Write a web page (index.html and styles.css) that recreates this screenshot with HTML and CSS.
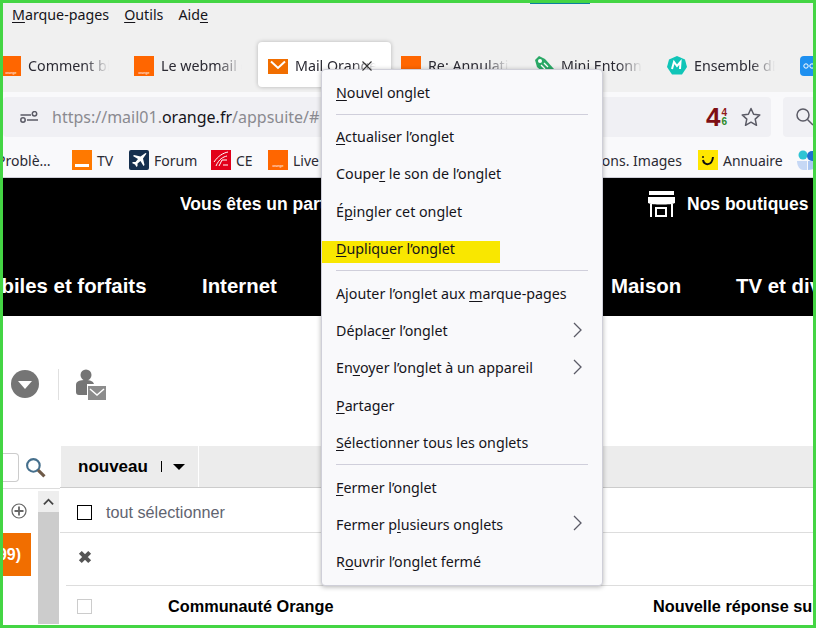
FILE: index.html
```html
<!DOCTYPE html>
<html lang="fr">
<head>
<meta charset="utf-8">
<title>Mail Orange</title>
<link rel="stylesheet" href="styles.css">
</head>
<body>
<div class="window">
  <div class="sync-line"></div>
  <div class="menubar">
    <span><u>M</u>arque-pages</span>
    <span><u>O</u>utils</span>
    <span>Aid<u>e</u></span>
  </div>

  <div class="tabs">
    <div class="tab first">
      <svg class="fav" viewBox="0 0 20 20"><rect width="20" height="20" fill="#ff6600"/><text x="10" y="18" class="tiny">orange</text></svg>
      <span class="tab-title">Comment bloquer</span>
    </div>
    <div class="tab second">
      <svg class="fav" viewBox="0 0 20 20"><rect width="20" height="20" fill="#ff6600"/><text x="10" y="18" class="tiny">orange</text></svg>
      <span class="tab-title">Le webmail d'Orange</span>
    </div>
    <div class="tab active">
      <svg class="fav" viewBox="0 0 20 20"><rect width="20" height="15" y="3" fill="#f16e00"/><path d="M3 5.500 10 12 17 5.500" fill="none" stroke="#fff" stroke-width="2"/></svg>
      <span class="tab-title">Mail Orange</span>
      <svg class="close" viewBox="0 0 10 10"><path d="M0.500 0.500 9.500 9.500M9.500 0.500 0.500 9.500" stroke="#333" stroke-width="1.100"/></svg>
    </div>
    <div class="tab">
      <svg class="fav" viewBox="0 0 20 20"><rect width="20" height="20" fill="#ff6600"/></svg>
      <span class="tab-title">Re: Annulation</span>
    </div>
    <div class="tab">
      <svg class="fav" viewBox="0 0 20 20"><path d="M1 4 5 0 11 3 20 13 13 20 3 11Z" fill="#2aa866"/><circle cx="6" cy="5" r="2" fill="#fff"/><path d="M7 9 11 13M10 7 14 11" stroke="#fff" stroke-width="1.300"/></svg>
      <span class="tab-title">Mini Entonnoir</span>
    </div>
    <div class="tab">
      <svg class="fav" viewBox="0 0 20 20"><path d="M10 0 18 3.500 20 11 15 18.500 5 18.500 0 11 2 3.500Z" fill="#10c5b8"/><path d="M5 13 7 6 10 10 13.500 6 13 13" fill="none" stroke="#fff" stroke-width="2"/></svg>
      <span class="tab-title">Ensemble dEntonnoir</span>
    </div>
    <div class="tab">
      <svg class="fav" viewBox="0 0 20 20"><rect width="20" height="20" rx="4" fill="#1e90f0"/><circle cx="6" cy="10" r="2.200" fill="none" stroke="#fff"/><circle cx="12" cy="10" r="2.200" fill="none" stroke="#fff"/></svg>
    </div>
  </div>

  <div class="toolbar">
    <div class="urlbar">
      <svg class="tune" viewBox="0 0 18 12"><path d="M0.500 4H11" stroke="#5b5b66" stroke-width="1.500"/><circle cx="14.500" cy="2.800" r="2.200" fill="none" stroke="#5b5b66" stroke-width="1.500"/><circle cx="3" cy="9" r="2.200" fill="none" stroke="#5b5b66" stroke-width="1.500"/><path d="M7 9H18" stroke="#5b5b66" stroke-width="1.500"/></svg>
      <span class="url">https://mail01.<b>orange.fr</b>/appsuite/#</span>
      <span class="badge"><span class="big">4</span><span class="stack"><i class="red">4</i><i class="green">6</i></span></span>
      <svg class="star" viewBox="0 0 20 20"><path d="M10 1.500 12.600 7.200 18.800 7.900 14.200 12.100 15.500 18.300 10 15.200 4.500 18.300 5.800 12.100 1.200 7.900 7.400 7.200Z" fill="none" stroke="#5b5b66" stroke-width="1.500" stroke-linejoin="round"/></svg>
    </div>
    <div class="searchbar">
      <svg class="mag" viewBox="0 0 20 20"><circle cx="8" cy="8" r="6" fill="none" stroke="#5b5b66" stroke-width="1.500"/><path d="M12.500 12.500 18 18" stroke="#5b5b66" stroke-width="1.500"/></svg>
    </div>
  </div>

  <div class="bookmarks">
    <span class="bm-text clip">Problè…</span>
    <div class="bm bm-tv">
      <svg class="fav" viewBox="0 0 20 20"><rect width="20" height="20" fill="#ff7900"/><rect x="3" y="14" width="14" height="3" fill="#fff"/></svg>
      <span class="bm-text">TV</span>
    </div>
    <div class="bm bm-forum">
      <svg class="fav" viewBox="0 0 20 20"><rect width="20" height="20" rx="2" fill="#16304f"/><path d="M16.500 3 11.500 6.500 5 5 4 6 9 9 6.500 12 4 12 3 13 6 14.500 7.500 17 8.500 16 8.500 13.500 11.500 11 14.500 16 15.500 15 14 8.500 17.500 3.500Z" fill="#fff"/></svg>
      <span class="bm-text">Forum</span>
    </div>
    <div class="bm bm-ce">
      <svg class="fav" viewBox="0 0 20 20"><rect width="20" height="20" fill="#e2001a"/><path d="M3 12C7 6 12 3 17 2M5 16C8 9 12 7 16 6M8 16 11 10H16M12 15H17" fill="none" stroke="#fff" stroke-width="1"/></svg>
      <span class="bm-text">CE</span>
    </div>
    <div class="bm bm-live">
      <svg class="fav" viewBox="0 0 20 20"><rect width="20" height="20" fill="#ff6600"/><text x="10" y="17" class="tiny">orange</text></svg>
      <span class="bm-text">Live</span>
    </div>
    <span class="bm-text bm-cons">Cons. Images</span>
    <div class="bm bm-annu">
      <svg class="fav" viewBox="0 0 20 20"><rect width="20" height="20" fill="#ffe600"/><path d="M5 10C6 16 14 16 15 7" fill="none" stroke="#111" stroke-width="2"/><circle cx="5" cy="7" r="1" fill="#111"/></svg>
      <span class="bm-text">Annuaire</span>
    </div>
    <svg class="fav bm-last" viewBox="0 0 20 20"><circle cx="6" cy="5" r="4.500" fill="#2ec4d4"/><circle cx="15" cy="6" r="5" fill="#1e6fd0"/><path d="M0 11H10V20H6C3 20 0 16 0 11Z" fill="#c6d8f5"/><path d="M11 11H20V14C20 18 16 20 11 20Z" fill="#a9c6f2"/></svg>
  </div>

  <div class="banner">
    <div class="banner-top">
      <span class="promo">Vous êtes un particulier</span>
      <svg class="shop" viewBox="0 0 27 27"><path d="M1 1H26V5H1Z" fill="#fff"/><path d="M0 7H27V13C24 15 3 15 0 13Z" fill="#fff"/><path d="M2 14H4V27H2ZM23 14H25V27H23ZM7 17H19V27H17V19H9V25H17V27H7Z" fill="#fff"/></svg>
      <span class="shops">Nos boutiques</span>
    </div>
    <nav class="banner-nav">
      <span class="n1">Mobiles et forfaits</span>
      <span class="n2">Internet</span>
      <span class="n3">Maison</span>
      <span class="n4">TV et divertissement</span>
    </nav>
  </div>

  <div class="actions">
    <svg class="round" viewBox="0 0 28 28"><circle cx="14" cy="14" r="14" fill="#757575"/><path d="M7 11H21L14 19Z" fill="#fff"/></svg>
    <span class="vsep"></span>
    <svg class="person" viewBox="0 0 30 32"><circle cx="10" cy="6" r="5.500" fill="#757575"/><path d="M0 16C0 12 4 11 10 11 14 11 17 12 18 15H11V26H3C1 26 0 25 0 23Z" fill="#757575"/><rect x="12" y="17" width="18" height="14" fill="#8c8c8c"/><path d="M14 20 21 26 28 20" fill="none" stroke="#fff" stroke-width="1.500"/></svg>
  </div>

  <div class="mail">
    <aside class="side">
      <div class="side-search">
        <span class="input"></span>
        <svg class="side-mag" viewBox="0 0 20 20"><circle cx="8" cy="8" r="6" fill="none" stroke="#456f8c" stroke-width="2"/><path d="M12.500 12.500 18.500 18.500" stroke="#6e5a48" stroke-width="3"/></svg>
      </div>
      <div class="side-body">
        <div class="folders">
          <svg class="plus" viewBox="0 0 16 16"><circle cx="8" cy="8" r="7" fill="none" stroke="#666" stroke-width="1.200"/><path d="M8 3.500V12.500M3.500 8H12.500" stroke="#666" stroke-width="1.800"/></svg>
          <div class="count"><span>(99)</span></div>
        </div>
        <div class="scroll">
          <div class="scroll-up"><svg viewBox="0 0 12 8"><path d="M1 6.500 6 1.500 11 6.500" fill="none" stroke="#444" stroke-width="2"/></svg></div>
        </div>
      </div>
    </aside>
    <section class="list">
      <div class="list-head">
        <div class="new-btn"><b>nouveau</b><span class="bar"></span><span class="caret"></span></div>
      </div>
      <div class="row-all"><span class="check dark"></span><span class="all-label">tout sélectionner</span></div>
      <div class="row-x"><svg class="x" viewBox="0 0 12 12"><path d="M2 2 10 10M10 2 2 10" stroke="#555" stroke-width="3.500"/></svg></div>
      <div class="row-msg">
        <span class="check"></span>
        <span class="from">Communauté Orange</span>
        <span class="subject">Nouvelle réponse sur le sujet</span>
      </div>
    </section>
  </div>

  <div class="menu">
    <div class="item"><span><u>N</u>ouvel onglet</span></div>
    <hr>
    <div class="item"><span><u>A</u>ctualiser l’onglet</span></div>
    <div class="item"><span>Coupe<u>r</u> le son de l’onglet</span></div>
    <div class="item"><span>É<u>p</u>ingler cet onglet</span></div>
    <div class="item hl"><span><u>D</u>upliquer l’onglet</span></div>
    <hr>
    <div class="item"><span>Ajouter l’onglet aux <u>m</u>arque-pages</span></div>
    <div class="item"><span>Déplac<u>e</u>r l’onglet</span><svg class="chev" viewBox="0 0 9 16"><path d="M1 1 8 8 1 15" fill="none" stroke="#5b5b66" stroke-width="1.300"/></svg></div>
    <div class="item"><span>En<u>v</u>oyer l’onglet à un appareil</span><svg class="chev" viewBox="0 0 9 16"><path d="M1 1 8 8 1 15" fill="none" stroke="#5b5b66" stroke-width="1.300"/></svg></div>
    <div class="item"><span><u>P</u>artager</span></div>
    <div class="item"><span><u>S</u>électionner tous les onglets</span></div>
    <hr>
    <div class="item"><span><u>F</u>ermer l’onglet</span></div>
    <div class="item"><span>Fermer p<u>l</u>usieurs onglets</span><svg class="chev" viewBox="0 0 9 16"><path d="M1 1 8 8 1 15" fill="none" stroke="#5b5b66" stroke-width="1.300"/></svg></div>
    <div class="item"><span>R<u>o</u>uvrir l’onglet fermé</span></div>
  </div>
</div>
</body>
</html>
```
FILE: styles.css
```css
* { box-sizing: border-box; }
html, body { margin: 0; padding: 0; }
body { width: 816px; height: 628px; overflow: hidden; background: #fff; }
.window {
  position: relative;
  width: 816px;
  height: 628px;
  border: 3px solid #44d544;
  overflow: hidden;
  background: #fff;
  font-family: "Noto Sans", "Open Sans", sans-serif;
  color: #15141a;
}
.sync-line { position: absolute; top: 0; left: 527px; width: 60px; height: 1px; background: #0a7fa0; }

.menubar {
  height: 25px;
  background: #f0f0f0;
  display: flex;
  gap: 15px;
  padding: 2px 0 0 9px;
  font-size: 14.250px;
  line-height: 20px;
}
.menubar u, .menu u { text-underline-offset: 2px; text-decoration-thickness: 1px; }

.tabs {
  height: 64px;
  background: #f0f0f0;
  display: flex;
  padding-top: 14px;
  margin-left: -8px;
  width: 821px;
}
.tab {
  flex: 0 0 133px;
  height: 45px;
  display: flex;
  align-items: center;
  padding: 2px 0 0 10px;
  font-size: 14.250px;
  white-space: nowrap;
  overflow: hidden;
}
.tab.first { padding-left: 6px; flex-basis: 129px; }
.tab.second { flex-basis: 134px; }
.tab.active {
  background: #fff;
  border-radius: 4px;
  box-shadow: 0 0 4px rgba(0,0,0,.25);
  overflow: visible;
}
.fav { width: 20px; height: 20px; flex: none; display: block; }
.tiny { font: 3.600px "Liberation Sans", sans-serif; fill: #fff; text-anchor: middle; }
.tab-title {
  margin-left: 7px;
  width: 81px;
  overflow: hidden;
  color: #2b2a33;
  -webkit-mask-image: linear-gradient(to right, #000 70%, transparent 100%);
  mask-image: linear-gradient(to right, #000 70%, transparent 100%);
}
.close { width: 10px; height: 10px; margin-left: -14px; position: relative; z-index: 1; }

.toolbar {
  height: 48px;
  background: #f9f9fb;
  display: flex;
  gap: 12px;
  padding: 5px 0 3px 0;
}
.urlbar {
  width: 768px;
  flex: none;
  height: 40px;
  background: #f0f0f4;
  border-radius: 4px;
  display: flex;
  align-items: center;
  padding-left: 17px;
}
.tune { width: 18px; height: 12px; flex: none; }
.url { margin-left: 14px; font-size: 16px; color: #8a8a90; white-space: nowrap; width: 654px; flex: none; }
.url b { font-weight: 400; color: #15141a; }
.badge { display: flex; align-items: center; font-family: "Liberation Sans", sans-serif; font-weight: 700; width: 24px; flex: none; }
.big { font-size: 26px; line-height: 24px; color: #7e0f14; }
.stack { display: flex; flex-direction: column; font-size: 10px; line-height: 9px; margin-left: 1px; }
.stack i { font-style: normal; }
.red { color: #8f1a1a; }
.green { color: #2a8a2a; }
.star { width: 20px; height: 20px; margin-left: 11px; flex: none; }
.searchbar { width: 60px; flex: none; height: 40px; background: #f0f0f4; border-radius: 4px; padding: 10px 0 0 12px; }
.mag { width: 20px; height: 20px; display: block; }

.bookmarks {
  height: 38px;
  background: #f9f9fb;
  border-bottom: 1px solid #cfcfd8;
  padding-top: 3px;
  display: flex;
  align-items: center;
  font-size: 14px;
  white-space: nowrap;
}
.bm { display: flex; align-items: center; gap: 5px; flex: none; }
.bm-text { color: #2b2a33; }
.clip { margin-left: -6px; width: 58px; flex: none; }
.bm-tv { margin-left: 17px; width: 57px; }
.bm-forum { width: 82px; }
.bm-ce { width: 57px; }
.bm-live { width: 310px; }
.bm-cons { flex: none; width: 105px; margin-left: 15px; }
.bm-annu { width: 99px; }

.banner { height: 138px; background: #000; color: #fff; font-family: "Liberation Sans", sans-serif; font-weight: 700; white-space: nowrap; }
.banner-top { height: 97px; display: flex; align-items: flex-start; padding-top: 16px; font-size: 17.500px; line-height: 20px; }
.promo { margin-left: 177px; width: 468px; overflow: hidden; flex: none; }
.shop { width: 27px; height: 27px; flex: none; margin-top: -4px; }
.shops { margin-left: 12px; }
.banner-nav { height: 41px; font-size: 20.400px; line-height: 22px; display: flex; }
.n1 { margin-left: -31px; width: 230px; flex: none; }
.n2 { width: 409px; flex: none; }
.n3 { width: 125px; flex: none; }

.actions { height: 130px; display: flex; align-items: flex-start; padding: 54px 0 0 8px; }
.round { width: 28px; height: 28px; flex: none; }
.vsep { width: 1px; height: 31px; background: #e0e0e0; margin: -1px 17px 0 19px; flex: none; }
.person { width: 30px; height: 32px; flex: none; margin-top: -1px; }

.mail { display: flex; height: 180px; }
.side { width: 57px; flex: none; }
.side-search { height: 42px; display: flex; align-items: center; }
.input { width: 16px; height: 29px; border: 1px solid #ccc; border-left: 0; border-radius: 0 4px 4px 0; background: #fff; flex: none; }
.side-mag { width: 21px; height: 21px; margin-left: 6px; flex: none; }
.side-body { display: flex; border-top: 1px solid #ddd; padding-top: 2px; height: 136px; }
.folders { width: 35px; flex: none; }
.plus { display: block; width: 16px; height: 16px; margin: 12px 0 0 8px; }
.count {
  width: 28px;
  height: 43px;
  margin-top: 14px;
  background: #f16e00;
  color: #fff;
  font: 700 16px/43px "Liberation Sans", sans-serif;
  display: flex;
  justify-content: flex-end;
  padding-right: 10px;
  white-space: nowrap;
  overflow: hidden;
}
.count span { flex: none; }
.scroll { width: 21px; background: #ccc; flex: none; }
.scroll-up { height: 21px; background: #eee; display: flex; align-items: center; justify-content: center; }
.scroll-up svg { width: 11px; height: 8px; }

.list { flex: 1; font-family: "Liberation Sans", sans-serif; min-width: 0; }
.list-head { height: 42px; background: #ececec; border-bottom: 1px solid #ccc; }
.new-btn {
  width: 139px;
  height: 41px;
  border-left: 1px solid #fff;
  border-right: 1px solid #fff;
  display: flex;
  align-items: center;
  padding-left: 17px;
  font-size: 17px;
  color: #000;
}
.bar { width: 1px; height: 11px; background: #000; margin-left: 13px; }
.caret { width: 0; height: 0; border: 6.500px solid transparent; border-top: 6.500px solid #000; border-bottom: 0; margin-left: 11px; }
.row-all { height: 45px; border-bottom: 1px solid #ddd; display: flex; align-items: center; padding: 4px 0 0 17px; }
.check { width: 15px; height: 15px; border: 1px solid #ccc; flex: none; }
.check.dark { border-color: #000; }
.all-label { margin-left: 14px; font-size: 16.200px; color: #5f6470; }
.row-x { height: 53px; border-bottom: 1px solid #ddd; margin-left: 6px; display: flex; align-items: center; padding: 0 0 4px 12px; }
.x { width: 14px; height: 14px; }
.row-msg { display: flex; align-items: center; height: 40px; padding-left: 17px; font-weight: 700; font-size: 16.300px; color: #000; white-space: nowrap; }
.from { margin-left: 76px; width: 485px; flex: none; }

.menu {
  position: absolute;
  left: 318px;
  top: 66px;
  width: 282px;
  height: 517px;
  background: #f9f9fb;
  border: 1px solid #cfcfd8;
  border-radius: 4px;
  box-shadow: 0 1px 5px rgba(0,0,0,.3);
  padding: 3.500px 0;
  font-size: 14.250px;
  color: #15141a;
}
.item {
  position: relative;
  height: 37.400px;
  display: flex;
  align-items: center;
  justify-content: space-between;
  padding: 0 20px 0 14px;
  white-space: nowrap;
}
.item > span { position: relative; }
.item.hl::before {
  content: "";
  position: absolute;
  left: 0;
  top: 11px;
  width: 178px;
  height: 22px;
  background: #f9e700;
}
.chev { width: 9px; height: 16px; margin-top: -2px; flex: none; }
.menu hr { border: 0; height: 1px; background: #d0cfdb; margin: 3px 14px; }
```
